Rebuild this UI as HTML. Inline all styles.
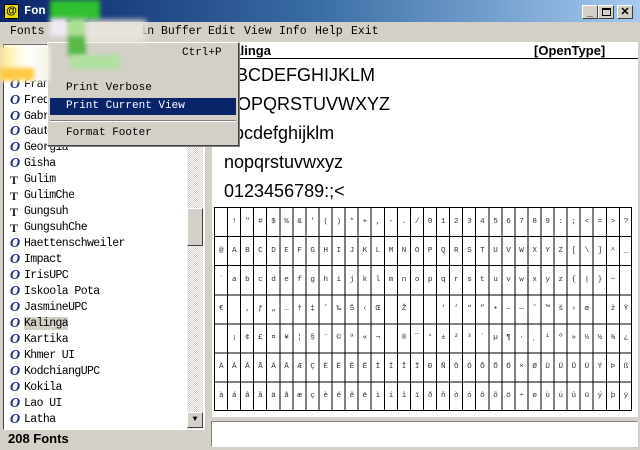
<!DOCTYPE html>
<html><head><meta charset="utf-8"><style>
*{margin:0;padding:0;box-sizing:border-box}
body{width:640px;height:450px;background:#d4d0c8;position:relative;overflow:hidden;font-family:"Liberation Mono",monospace}
.a{position:absolute}
#title{left:0;top:0;width:640px;height:22px;background:linear-gradient(90deg,#0a246a 0%,#3a6ea5 50%,#a6caf0 100%)}
.mn{top:25px;font-size:11.5px;color:#000}
#list{left:3px;top:44px;width:202px;height:386px;background:#fff;border:1px solid #404040;border-right-color:#fff;border-bottom-color:#fff}
.it{position:absolute;left:6px;font-size:11.5px;letter-spacing:-0.6px;height:16px;line-height:16px;white-space:pre;overflow:hidden}
.ic,.tt{display:inline-block;width:14px;height:16px;line-height:16px;vertical-align:top;letter-spacing:0}
.ic{font:italic bold 14px/16px "Liberation Serif",serif;color:#1c2a8c}
.tt{font:bold 12px/16px "Liberation Serif",serif;color:#202020}
#sb{left:187px;top:45px;width:16px;height:384px;background:repeating-conic-gradient(#d4d0c8 0 25%,#fff 0 50%) 0 0/2px 2px}
.btn{background:#d4d0c8;border:1px solid;border-color:#fff #404040 #404040 #fff}
#right{left:212px;top:42px;width:426px;height:375px;background:#fff}
.big{left:224px;font-family:"Liberation Sans",sans-serif;font-size:18px;color:#000}
#grid{left:214px;top:207px;width:418px;height:204px;border:1px solid #000;
background:repeating-linear-gradient(90deg,transparent 0 12.06px,#000 12.06px 13.06px),repeating-linear-gradient(180deg,transparent 0 28.1px,#000 28.1px 29.1px)}
.gr{position:absolute;left:4px;font-size:7.6px;letter-spacing:8.5px;white-space:pre;color:#333;height:29px;line-height:29px}
</style></head><body>
<div id="title" class="a"></div>
<div class="a" style="left:4px;top:4px;width:15px;height:15px;background:#e8d800;border:1px solid #000;font:bold 11px 'Liberation Sans';text-align:center;line-height:13px">@</div>
<div class="a" style="left:24px;top:4px;color:#fff;font:bold 12px 'Liberation Mono'">Fon</div>
<div class="a btn" style="left:582px;top:5px;width:16px;height:14px;font:bold 10px sans-serif;text-align:center;line-height:14px">_</div>
<div class="a btn" style="left:598px;top:5px;width:16px;height:14px"><div style="margin:2px 3px;width:9px;height:8px;border:1px solid #000;border-top-width:2px"></div></div>
<div class="a btn" style="left:617px;top:5px;width:16px;height:14px;font:bold 11px sans-serif;text-align:center;line-height:12px">✕</div>
<div class="a mn" style="left:10px">Fonts</div>
<div class="a mn" style="left:92px">isplay in Buffer</div>
<div class="a mn" style="left:208px">Edit</div>
<div class="a mn" style="left:244px">View</div>
<div class="a mn" style="left:279px">Info</div>
<div class="a mn" style="left:315px">Help</div>
<div class="a mn" style="left:351px">Exit</div>

<div id="list" class="a">
<div class="it" style="top:32px"><span class="ic">O</span>Franklin</div>
<div class="it" style="top:48px"><span class="ic">O</span>Fred</div>
<div class="it" style="top:64px"><span class="ic">O</span>Gabriola</div>
<div class="it" style="top:79px"><span class="ic">O</span>Gautami</div>
<div class="it" style="top:95px"><span class="ic">O</span>Georgia</div>
<div class="it" style="top:111px"><span class="ic">O</span>Gisha</div>
<div class="it" style="top:127px"><span class="tt">T</span>Gulim</div>
<div class="it" style="top:143px"><span class="tt">T</span>GulimChe</div>
<div class="it" style="top:159px"><span class="tt">T</span>Gungsuh</div>
<div class="it" style="top:175px"><span class="tt">T</span>GungsuhChe</div>
<div class="it" style="top:191px"><span class="ic">O</span>Haettenschweiler</div>
<div class="it" style="top:207px"><span class="ic">O</span>Impact</div>
<div class="it" style="top:223px"><span class="ic">O</span>IrisUPC</div>
<div class="it" style="top:239px"><span class="ic">O</span>Iskoola Pota</div>
<div class="it" style="top:255px"><span class="ic">O</span>JasmineUPC</div>
<div class="it" style="top:271px"><span class="ic">O</span><span style="background:#d4d0c8">Kalinga</span></div>
<div class="it" style="top:287px"><span class="ic">O</span>Kartika</div>
<div class="it" style="top:303px"><span class="ic">O</span>Khmer UI</div>
<div class="it" style="top:319px"><span class="ic">O</span>KodchiangUPC</div>
<div class="it" style="top:335px"><span class="ic">O</span>Kokila</div>
<div class="it" style="top:351px"><span class="ic">O</span>Lao UI</div>
<div class="it" style="top:367px"><span class="ic">O</span>Latha</div>
</div>
<div id="sb" class="a"></div>
<div class="a btn" style="left:187px;top:208px;width:16px;height:38px"></div>
<div class="a btn" style="left:187px;top:412px;width:16px;height:16px;font-size:8px;text-align:center;line-height:14px">▼</div>
<div class="a" style="left:8px;top:431px;font:bold 13px 'Liberation Sans',sans-serif">208 Fonts</div>

<div id="right" class="a"></div>
<div class="a" style="left:212px;top:58px;width:426px;height:1px;background:#000"></div>
<div class="a" style="left:224px;top:43px;font:bold 13px 'Liberation Sans',sans-serif">Kalinga</div>
<div class="a" style="left:534px;top:43px;font:bold 13px 'Liberation Sans',sans-serif">[OpenType]</div>
<div class="a big" style="top:65px">ABCDEFGHIJKLM</div>
<div class="a big" style="top:94px">NOPQRSTUVWXYZ</div>
<div class="a big" style="top:123px">abcdefghijklm</div>
<div class="a big" style="top:152px">nopqrstuvwxyz</div>
<div class="a big" style="top:181px">0123456789:;&lt;</div>
<div id="grid" class="a">
<div class="gr" style="top:0"> !"#$%&amp;'()*+,-./0123456789:;&lt;=&gt;?</div>
<div class="gr" style="top:29px">@ABCDEFGHIJKLMNOPQRSTUVWXYZ[\]^_</div>
<div class="gr" style="top:58px">`abcdefghijklmnopqrstuvwxyz{|}~ </div>
<div class="gr" style="top:87px">€ ‚ƒ„…†‡ˆ‰Š‹Œ Ž  ‘’“”•–—˜™š›œ žŸ</div>
<div class="gr" style="top:116px"> ¡¢£¤¥¦§¨©ª«¬ ®¯°±²³´µ¶·¸¹º»¼½¾¿</div>
<div class="gr" style="top:145px">ÀÁÂÃÄÅÆÇÈÉÊËÌÍÎÏÐÑÒÓÔÕÖ×ØÙÚÛÜÝÞß</div>
<div class="gr" style="top:174px">àáâãäåæçèéêëìíîïðñòóôõö÷øùúûüýþÿ</div>
</div>
<div class="a" style="left:211px;top:421px;width:427px;height:26px;background:#fff;border:1px solid #808080;border-right-color:#fff;border-bottom-color:#fff"></div>

<div class="a" style="left:47px;top:42px;width:192px;height:104px;background:#d4d0c8;border:1px solid;border-color:#fff #404040 #404040 #fff;box-shadow:1px 1px 0 #808080"></div>
<div class="a" style="left:182px;top:47px;font-size:11px">Ctrl+P</div>
<div class="a" style="left:66px;top:82px;font-size:11px">Print Verbose</div>
<div class="a" style="left:50px;top:98px;width:186px;height:17px;background:#0a246a"></div>
<div class="a" style="left:66px;top:100px;font-size:11px;color:#fff">Print Current View</div>
<div class="a" style="left:50px;top:120px;width:186px;height:2px;border-top:1px solid #808080;border-bottom:1px solid #fff"></div>
<div class="a" style="left:66px;top:127px;font-size:11px">Format Footer</div>

<div class="a" style="left:0;top:46px;width:50px;height:35px;background:linear-gradient(90deg,#ffe890,#fffbe0 40%,#fff 60%,#f0f0e0);filter:blur(2px)"></div>
<div class="a" style="left:0;top:68px;width:34px;height:12px;background:#ffc840;filter:blur(2px)"></div>
<div class="a" style="left:50px;top:0;width:50px;height:20px;background:#30c030;filter:blur(2px)"></div>
<div class="a" style="left:50px;top:18px;width:18px;height:18px;background:#f0e8f4;filter:blur(2px)"></div>
<div class="a" style="left:68px;top:18px;width:18px;height:18px;background:#a8e090;filter:blur(2px)"></div>
<div class="a" style="left:68px;top:36px;width:18px;height:20px;background:#58b848;filter:blur(2px)"></div>
<div class="a" style="left:70px;top:55px;width:50px;height:14px;background:#b0e0a0;filter:blur(2px)"></div>
<div class="a" style="left:86px;top:20px;width:60px;height:22px;background:#e8e4dc;filter:blur(3px)"></div>
</body></html>
